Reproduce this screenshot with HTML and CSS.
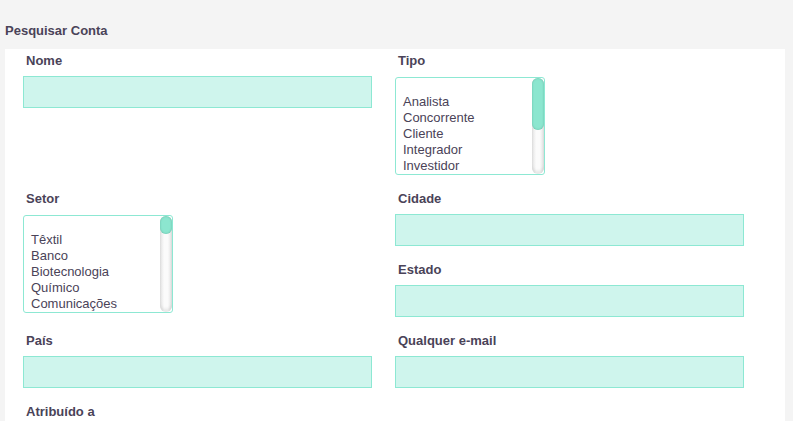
FILE: index.html
```html
<!DOCTYPE html>
<html lang="pt-BR">
  <head>
    <meta charset="UTF-8" />
    <title>Pesquisar Conta</title>
    <link rel="stylesheet" href="styles.css">
  </head>
  <body>
    <h2 class="page-title">Pesquisar Conta</h2>

    <div class="panel">
      <form class="search-form">
        <div class="field">
          <label for="nome">Nome</label>
          <input type="text" id="nome" />
        </div>

        <div class="field">
          <label for="tipo">Tipo</label>
          <div class="listbox-wrap">
            <select id="tipo" class="listbox" multiple size="6">
              <option value=""></option>
              <option>Analista</option>
              <option>Concorrente</option>
              <option>Cliente</option>
              <option>Integrador</option>
              <option>Investidor</option>
              <option>Parceiro</option>
              <option>Imprensa</option>
              <option>Cliente Potencial</option>
              <option>Revendedor</option>
              <option>Outro</option>
            </select>
            <!-- native scrollbar is hidden in the render, so draw one -->
            <div class="scroll-track"><div class="scroll-thumb" style="height: 52px"></div></div>
          </div>
        </div>

        <div class="field">
          <label for="setor">Setor</label>
          <div class="listbox-wrap">
            <select id="setor" class="listbox" multiple size="6">
              <option value=""></option>
              <option>Têxtil</option>
              <option>Banco</option>
              <option>Biotecnologia</option>
              <option>Químico</option>
              <option>Comunicações</option>
              <option>Construção</option>
              <option>Consultoria</option>
              <option>Educação</option>
              <option>Eletrônica</option>
              <option>Energia</option>
              <option>Engenharia</option>
              <option>Entretenimento</option>
              <option>Meio Ambiente</option>
              <option>Finanças</option>
              <option>Alimentos e Bebidas</option>
              <option>Governo</option>
              <option>Saúde</option>
              <option>Hotelaria</option>
              <option>Seguros</option>
              <option>Máquinas</option>
              <option>Manufatura</option>
              <option>Mídia</option>
              <option>Sem fins lucrativos</option>
              <option>Lazer</option>
              <option>Varejo</option>
              <option>Remessa</option>
              <option>Tecnologia</option>
              <option>Telecomunicações</option>
              <option>Transporte</option>
              <option>Serviços públicos</option>
              <option>Outro</option>
            </select>
            <div class="scroll-track"><div class="scroll-thumb" style="height: 18px"></div></div>
          </div>
        </div>

        <div class="stack">
          <div class="field">
            <label for="cidade">Cidade</label>
            <input type="text" id="cidade" />
          </div>
          <div class="field">
            <label for="estado">Estado</label>
            <input type="text" id="estado" />
          </div>
        </div>

        <div class="field">
          <label for="pais">País</label>
          <input type="text" id="pais" />
        </div>

        <div class="field">
          <label for="email">Qualquer e-mail</label>
          <input type="text" id="email" />
        </div>

        <div class="field">
          <label for="atribuido">Atribuído a</label>
          <input type="text" id="atribuido" />
        </div>
      </form>
    </div>
  </body>
</html>
```

FILE: styles.css
```css
html,
body {
  height: 100%;
  overflow: hidden;
}

body {
  font-family: "Liberation Sans", Arial, sans-serif;
  font-size: 13px;
  line-height: 16px;
  color: #4a4358;
  background: #f4f4f4;
  margin: 0;
  padding: 23px 8px 0 5px;
}

.page-title {
  margin: 0 0 10px;
  font-size: 13px;
  line-height: 16px;
  font-weight: bold;
}

.panel {
  background: #fff;
  padding: 4px 41px 40px 18px;
}

.search-form {
  display: grid;
  grid-template-columns: 349px 349px;
  column-gap: 23px;
  row-gap: 16px;
  align-items: start;
}

.stack {
  display: flex;
  flex-direction: column;
  gap: 16px;
}

.field label {
  display: block;
  font-weight: bold;
  margin: 0 0 7px 3px;
}

.field input[type="text"] {
  display: block;
  box-sizing: border-box;
  width: 100%;
  height: 32px;
  margin: 0;
  padding: 4px 8px;
  border: 1px solid #8de8d3;
  background: #cff5ed;
  font: inherit;
  color: inherit;
  outline: none;
}

/* collapses with the label margin, so the list sits 1px lower than inputs */
.listbox-wrap {
  position: relative;
  width: 150px;
  margin-top: 8px;
}

.listbox {
  display: block;
  box-sizing: border-box;
  width: 150px;
  height: 98px;
  margin: 0;
  padding: 0;
  border: 1px solid #8de8d3;
  border-radius: 3px;
  background: #fff;
  font: inherit;
  color: inherit;
  outline: none;
  overflow-y: hidden;
  scrollbar-width: none;
}

.listbox option {
  height: 16px;
  min-height: 16px;
  line-height: 16px;
  padding: 0 7px;
  color: #4a4358;
}

.scroll-track {
  position: absolute;
  top: 1px;
  right: 1px;
  bottom: 1px;
  width: 12px;
  border-radius: 6px;
  background: linear-gradient(to right, #e4e4e4, #fbfbfb 35%, #fbfbfb 65%, #e0e0e0);
  box-shadow: inset 0 -3px 3px rgba(0, 0, 0, 0.08);
}

.scroll-thumb {
  border-radius: 6px;
  background: #8ce6cf;
  box-shadow: inset 0 0 2px rgba(40, 120, 100, 0.45);
}
```
